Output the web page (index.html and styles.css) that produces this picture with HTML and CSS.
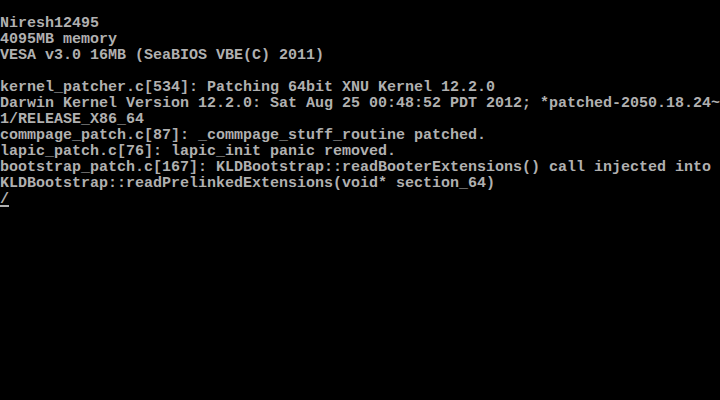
FILE: index.html
```html
<!DOCTYPE html>
<html>
<head>
<meta charset="utf-8">
<link rel="stylesheet" href="styles.css">
</head>
<body>
<div class="screen">
<pre class="console">
Niresh12495
4095MB memory
VESA v3.0 16MB (SeaBIOS VBE(C) 2011)

kernel_patcher.c[534]: Patching 64bit XNU Kernel 12.2.0
Darwin Kernel Version 12.2.0: Sat Aug 25 00:48:52 PDT 2012; *patched-2050.18.24~
1/RELEASE_X86_64
commpage_patch.c[87]: _commpage_stuff_routine patched.
lapic_patch.c[76]: lapic_init panic removed.
bootstrap_patch.c[167]: KLDBootstrap::readBooterExtensions() call injected into
KLDBootstrap::readPrelinkedExtensions(void* section_64)
<span class="cursor">/</span></pre>
</div>
</body>
</html>
```
FILE: styles.css
```css
html, body {
  margin: 0;
  padding: 0;
  background: #000;
}
.screen {
  width: 720px;
  height: 400px;
  background: #000;
  overflow: hidden;
  padding-top: 16px;
  box-sizing: border-box;
}
.console {
  margin: 0;
  padding: 0;
  font-family: "Liberation Mono", "DejaVu Sans Mono", monospace;
  font-size: 15px;
  font-weight: bold;
  line-height: 16px;
  color: #b0b0b0;
  white-space: pre;
}
.cursor {
  position: relative;
  display: inline-block;
  width: 9px;
  height: 16px;
  vertical-align: top;
}
.cursor::after {
  content: "";
  position: absolute;
  left: 0;
  right: 0;
  bottom: 1px;
  height: 2px;
  background: #b0b0b0;
}
```
